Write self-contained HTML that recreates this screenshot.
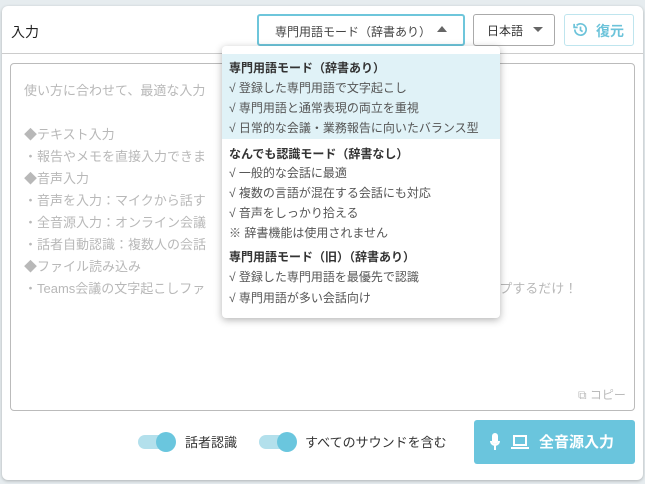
<!DOCTYPE html>
<html><head><meta charset="utf-8"><style>
*{box-sizing:border-box;margin:0;padding:0}
body{width:645px;height:484px;background:#e6ecef;font-family:"Liberation Sans","Noto Sans CJK JP",sans-serif;position:relative;overflow:hidden}
.card{position:absolute;left:2px;top:6px;width:641px;height:474px;background:#fff;border-radius:6px;box-shadow:0 1px 3px rgba(0,0,0,.25)}
.hdr{position:absolute;left:0;top:0;width:641px;height:48px;border-bottom:1px solid #ccc}
.ttl{position:absolute;left:9px;top:16px;font-size:14px;color:#222}
.sel{position:absolute;left:257px;top:14px;width:208px;height:32px;border:2px solid #6ec6db;border-radius:3px;font-size:12px;color:#444;padding:7px 0 0 16px}
.lang{position:absolute;left:473px;top:14px;width:82px;height:32px;border:1px solid #aaa;border-radius:3px;font-size:12px;color:#333;padding:7px 0 0 13px}
.up{position:absolute;width:0;height:0;border-left:5px solid transparent;border-right:5px solid transparent}
.rest{position:absolute;left:564px;top:14px;width:70px;height:32px;border:1px solid #bfe5ee;border-radius:3px;color:#6cc3da;font-size:14px;font-weight:bold;padding:6px 0 0 31px}
.ta{position:absolute;left:10px;top:63px;width:625px;height:348px;border:1px solid #bbb;border-radius:4px}
.txt{position:absolute;left:24px;top:80px;font-size:13px;color:#b8b8b8;line-height:22px}
.menu{position:absolute;left:222px;top:46px;width:278px;height:272px;background:#fff;border-radius:4px;box-shadow:0 2px 8px rgba(0,0,0,.3);font-size:12px;color:#555}
.menu .hl{position:absolute;left:0;top:8px;width:278px;height:85px;background:#e0f2f7}
.menu div.l{position:absolute;left:7px;white-space:nowrap}
.menu b{color:#333}
.copy{position:absolute;left:578px;top:386px;font-size:12px;color:#bbb}
.tg{position:absolute;width:36px;height:14px;border-radius:7px;background:#b3e0ec}
.tg i{position:absolute;right:-2px;top:-3px;width:20px;height:20px;border-radius:50%;background:#6ac6de}
.lbl{position:absolute;font-size:13px;color:#333}
.btn{position:absolute;left:474px;top:420px;width:161px;height:44px;background:#6ac5dd;border-radius:3px;color:#fff;font-size:15px;font-weight:bold;padding:11px 0 0 65px}
</style></head><body>
<div class="card">
<div class="hdr"></div>
<div class="ttl">入力</div>
</div>
<div class="sel">専門用語モード（辞書あり）</div>
<div class="up" style="left:437px;top:26px;border-bottom:6px solid #666"></div>
<div class="lang">日本語</div>
<div class="up" style="left:533px;top:27px;border-top:5px solid #666"></div>
<div class="rest">復元</div>
<svg style="position:absolute;left:572px;top:21px" width="17" height="17" viewBox="0 0 24 24" fill="none" stroke="#6cc3da" stroke-width="2.4"><path d="M4 12a8 8 0 1 0 2.5-5.8"/><path d="M3 4v5h5" /><path d="M12 8v5l3 2"/></svg>
<div class="ta"></div>
<div class="txt">使い方に合わせて、最適な入力<br><br>◆テキスト入力<br>・報告やメモを直接入力できま<br>◆音声入力<br>・音声を入力：マイクから話す<br>・全音源入力：オンライン会議<br>・話者自動認識：複数人の会話<br>◆ファイル読み込み<br>・Teams会議の文字起こしファ<span style="margin-left:294px">プするだけ！</span></div>
<div class="copy">⧉ コピー</div>
<div class="menu">
<div class="hl"></div>
<div class="l" style="top:13px"><b>専門用語モード（辞書あり）</b></div>
<div class="l" style="top:33px">√ 登録した専門用語で文字起こし</div>
<div class="l" style="top:53px">√ 専門用語と通常表現の両立を重視</div>
<div class="l" style="top:73px">√ 日常的な会議・業務報告に向いたバランス型</div>
<div class="l" style="top:99px"><b>なんでも認識モード（辞書なし）</b></div>
<div class="l" style="top:118px">√ 一般的な会話に最適</div>
<div class="l" style="top:138px">√ 複数の言語が混在する会話にも対応</div>
<div class="l" style="top:158px">√ 音声をしっかり拾える</div>
<div class="l" style="top:178px">※ 辞書機能は使用されません</div>
<div class="l" style="top:202px"><b>専門用語モード（旧）（辞書あり）</b></div>
<div class="l" style="top:222px">√ 登録した専門用語を最優先で認識</div>
<div class="l" style="top:243px">√ 専門用語が多い会話向け</div>
</div>
<div class="tg" style="left:138px;top:435px"><i></i></div>
<div class="lbl" style="left:185px;top:432px">話者認識</div>
<div class="tg" style="left:259px;top:435px"><i></i></div>
<div class="lbl" style="left:305px;top:432px">すべてのサウンドを含む</div>
<div class="btn">全音源入力</div>
<svg style="position:absolute;left:490px;top:433px" width="40" height="18" viewBox="0 0 40 18" fill="none" stroke="#fff" stroke-width="2"><rect x="3" y="1" width="4" height="9" rx="2" fill="#fff"/><path d="M1 8a4 4 0 0 0 8 0M5 12v5"/><rect x="24" y="3" width="12" height="9"/><path d="M21 15h18"/></svg>
</body></html>
